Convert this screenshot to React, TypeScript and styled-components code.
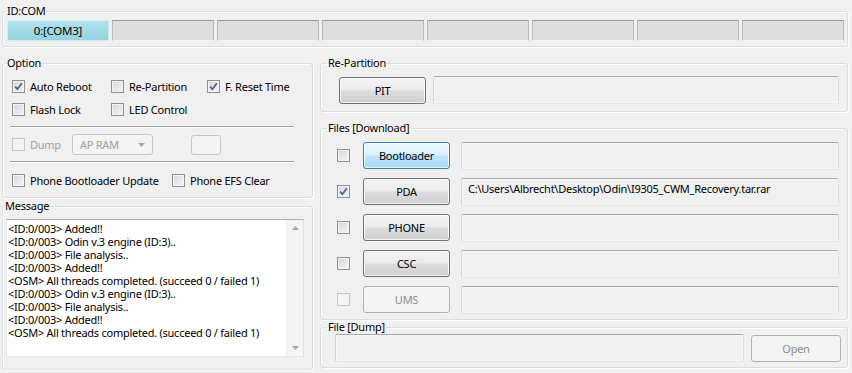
import React from 'react'
import styled, { createGlobalStyle, css } from 'styled-components'

const GlobalStyle = createGlobalStyle`
	html, body {
		margin: 0;
		padding: 0;
		background: #f0f0f0;
	}
	body {
		font-family: 'Noto Sans', 'Open Sans', sans-serif;
		font-size: 11px;
		letter-spacing: -0.25px;
		color: #000;
	}
`

const Window = styled.div`
	width: 852px;
	height: 373px;
	box-sizing: border-box;
	overflow: hidden;
	padding: 4px 4px 0 2px;
	background: #f0f0f0;
`

const Group = styled.fieldset<{ $mt?: number }>`
	margin: ${p => p.$mt ?? 0}px 0 0 0;
	padding: 0;
	min-width: 0;
	box-sizing: border-box;
	border: 1px solid #d5dfe5;
	border-radius: 3px;
	box-shadow: inset 1px 1px 0 #fff, 1px 1px 0 #fff;
`

const Legend = styled.legend<{ $x?: number }>`
	margin-left: ${p => p.$x ?? 3}px;
	padding: 0 1px;
	height: 14px;
	line-height: 14px;
	color: #000;
`

const Body = styled.div<{ $pad: string }>`
	padding: ${p => p.$pad};
`

const SlotRow = styled.div`
	display: grid;
	grid-template-columns: repeat(8, 102px);
	column-gap: 3px;
`

const Slot = styled.div<{ $active?: boolean }>`
	height: 21px;
	box-sizing: border-box;
	display: flex;
	align-items: center;
	justify-content: center;
	font-size: 11.5px;
	border: 1px solid;
	${p =>
		p.$active
			? css`
					background: linear-gradient(#b4e4ec, #9dd8e3 60%, #96d3df);
					border-color: #d6eff3 #c9eaf0 #c9eaf0 #d6eff3;
				`
			: css`
					background: #dedede;
					border-color: #9c9c9c #b9b9b9 #f4f4f4 #b9b9b9;
				`}
`

const Columns = styled.div`
	display: grid;
	grid-template-columns: 311px 528px;
	column-gap: 7px;
	margin-top: 9px;
`

const Column = styled.div`
	display: flex;
	flex-direction: column;
`

const OptionRow = styled.div<{ $cols: string; $mt?: number }>`
	display: grid;
	grid-template-columns: ${p => p.$cols};
	align-items: center;
	height: 20px;
	margin-top: ${p => p.$mt ?? 0}px;
`

const CheckLabel = styled.label<{ $disabled?: boolean }>`
	display: flex;
	align-items: center;
	gap: 5px;
	white-space: nowrap;
	color: ${p => (p.$disabled ? '#a0a0a0' : '#000')};
`

const Box = styled.span<{ $disabled?: boolean }>`
	width: 13px;
	height: 13px;
	box-sizing: border-box;
	flex: none;
	display: inline-flex;
	align-items: center;
	justify-content: center;
	border: 1px solid ${p => (p.$disabled ? '#c6c6c6' : '#8e8f8f')};
	background: ${p =>
		p.$disabled ? '#f4f4f4' : 'linear-gradient(135deg, #d6d6d6, #f6f6f6)'};
	box-shadow: inset 0 0 0 1px #f4f4f4;
`

const Separator = styled.div<{ $mt: number }>`
	margin: ${p => p.$mt}px 0 0 -2px;
	width: 284px;
	border-top: 1px solid #a0a0a0;
	border-bottom: 1px solid #fff;
`

const DumpRow = styled.div`
	display: flex;
	align-items: center;
	height: 21px;
	margin-top: 6px;
`

const Combo = styled.div`
	margin-left: 11px;
	width: 81px;
	height: 21px;
	box-sizing: border-box;
	border: 1px solid #c5c5c5;
	border-radius: 3px;
	background: #f4f4f4;
	color: #a0a0a0;
	display: flex;
	align-items: center;
	justify-content: space-between;
	padding: 0 7px 0 7px;
`

const SmallBox = styled.div`
	margin-left: 38px;
	width: 30px;
	height: 20px;
	box-sizing: border-box;
	border: 1px solid #c5c5c5;
	border-radius: 3px;
	background: #f4f4f4;
`

const Log = styled.div`
	width: 298px;
	height: 138px;
	box-sizing: border-box;
	border: 1px solid;
	border-color: #abadb3 #dbdfe6 #e3e9ef #e2e3ea;
	background: #fff;
	display: flex;
`

const LogText = styled.div`
	flex: 1;
	padding: 2px 0 0 1px;
	font-size: 11px;
	white-space: nowrap;
	overflow: hidden;
`

const LogLine = styled.div`
	height: 13px;
	line-height: 13px;
`

const ScrollBar = styled.div`
	width: 16px;
	background: #f4f4f4;
	border-left: 1px solid #f0f0f0;
	display: flex;
	flex-direction: column;
	justify-content: space-between;
	align-items: center;
	padding: 6px 0 6px;
`

const Button = styled.div<{ $variant?: 'hover' | 'disabled'; $w: number; $h?: number }>`
	width: ${p => p.$w}px;
	height: ${p => p.$h ?? 27}px;
	flex: none;
	box-sizing: border-box;
	border-radius: 3px;
	border: 1px solid #707070;
	display: flex;
	align-items: center;
	justify-content: center;
	font-size: 11px;
	color: #000;
	background: linear-gradient(#f2f2f2 0%, #ebebeb 49%, #dddddd 51%, #cfcfcf 100%);
	box-shadow: inset 0 0 0 1px rgba(255, 255, 255, 0.75);
	${p =>
		p.$variant === 'hover' &&
		css`
			border-color: #3c7fb1;
			background: linear-gradient(#eaf6fd 0%, #d9f0fc 49%, #bee6fd 51%, #a7d9f5 100%);
		`}
	${p =>
		p.$variant === 'disabled' &&
		css`
			border-color: #adb2b5;
			background: #f4f4f4;
			color: #8d8d8d;
			box-shadow: none;
		`}
`

const Field = styled.div<{ $h?: number }>`
	flex: 1;
	height: ${p => p.$h ?? 28}px;
	box-sizing: border-box;
	border: 1px solid;
	border-color: #a9a9a9 #dcdcdc #e6e6e6 #d4d4d4;
	border-radius: 2px;
	background: #f0f0f0;
	box-shadow: inset 0 0 0 1px #f7f7f7;
	padding: 2px 6px 0;
	font-size: 11px;
	white-space: nowrap;
	overflow: hidden;
`

const FileRow = styled.div<{ $h?: number; $gap?: number }>`
	display: flex;
	align-items: center;
	height: ${p => p.$h ?? 27}px;
	gap: ${p => p.$gap ?? 0}px;
`

const FileList = styled.div`
	display: flex;
	flex-direction: column;
	gap: 9px;
`

const FileButton = styled(Button)`
	margin: 0 11px 0 13px;
`

const Arrow = ({ up }: { up?: boolean }) => (
	<svg width='7' height='4' viewBox='0 0 7 4'>
		<path d={up ? 'M0 4 L3.5 0 L7 4 Z' : 'M0 0 L3.5 4 L7 0 Z'} fill='#a6a6a6' />
	</svg>
)

const Check = ({ checked, disabled }: { checked?: boolean; disabled?: boolean }) => (
	<Box $disabled={disabled}>
		{checked && (
			<svg width='9' height='9' viewBox='0 0 9 9'>
				<path
					d='M1.2 4.6 L3.4 7.2 L7.8 1.2'
					fill='none'
					stroke='#4a5f8c'
					strokeWidth='1.7'
				/>
			</svg>
		)}
	</Box>
)

const logLines = [
	'<ID:0/003> Added!!',
	'<ID:0/003> Odin v.3 engine (ID:3)..',
	'<ID:0/003> File analysis..',
	'<ID:0/003> Added!!',
	'<OSM> All threads completed. (succeed 0 / failed 1)',
	'<ID:0/003> Odin v.3 engine (ID:3)..',
	'<ID:0/003> File analysis..',
	'<ID:0/003> Added!!',
	'<OSM> All threads completed. (succeed 0 / failed 1)',
]

const files = [
	{ name: 'Bootloader', variant: 'hover' as const },
	{ name: 'PDA', checked: true, path: 'C:\\Users\\Albrecht\\Desktop\\Odin\\I9305_CWM_Recovery.tar.rar' },
	{ name: 'PHONE' },
	{ name: 'CSC' },
	{ name: 'UMS', variant: 'disabled' as const, disabled: true },
]

const App: React.FC = () => {
	return (
		<Window>
			<GlobalStyle />
			<Group>
				<Legend $x={3}>ID:COM</Legend>
				<Body $pad='2px 4px 5px 4px'>
					<SlotRow>
						<Slot $active>0:[COM3]</Slot>
						{Array.from({ length: 7 }).map((_, i) => (
							<Slot key={i} />
						))}
					</SlotRow>
				</Body>
			</Group>

			<Columns>
				<Column>
					<Group>
						<Legend $x={3}>Option</Legend>
						<Body $pad='6px 9px 7px 9px'>
							<OptionRow $cols='99px 96px auto'>
								<CheckLabel>
									<Check checked />
									Auto Reboot
								</CheckLabel>
								<CheckLabel>
									<Check />
									Re-Partition
								</CheckLabel>
								<CheckLabel>
									<Check checked />
									F. Reset Time
								</CheckLabel>
							</OptionRow>
							<OptionRow $cols='99px 96px auto' $mt={3}>
								<CheckLabel>
									<Check />
									Flash Lock
								</CheckLabel>
								<CheckLabel>
									<Check />
									LED Control
								</CheckLabel>
							</OptionRow>
							<Separator $mt={7} />
							<DumpRow>
								<CheckLabel $disabled>
									<Check disabled />
									Dump
								</CheckLabel>
								<Combo>
									AP RAM
									<Arrow />
								</Combo>
								<SmallBox />
							</DumpRow>
							<Separator $mt={6} />
							<OptionRow $cols='160px auto' $mt={7}>
								<CheckLabel>
									<Check />
									Phone Bootloader Update
								</CheckLabel>
								<CheckLabel>
									<Check />
									Phone EFS Clear
								</CheckLabel>
							</OptionRow>
						</Body>
					</Group>
					<Group $mt={1}>
						<Legend $x={1}>Message</Legend>
						<Body $pad='6px 8px 12px 3px'>
							<Log>
								<LogText>
									{logLines.map((l, i) => (
										<LogLine key={i}>{l}</LogLine>
									))}
								</LogText>
								<ScrollBar>
									<Arrow up />
									<Arrow />
								</ScrollBar>
							</Log>
						</Body>
					</Group>
				</Column>

				<Column>
					<Group>
						<Legend $x={6}>Re-Partition</Legend>
						<Body $pad='6px 8px 7px 18px'>
							<FileRow $h={28} $gap={7}>
								<Button $w={87}>PIT</Button>
								<Field />
							</FileRow>
						</Body>
					</Group>
					<Group $mt={9}>
						<Legend $x={6}>Files [Download]</Legend>
						<Body $pad='7px 8px 6px 16px'>
							<FileList>
								{files.map(f => (
									<FileRow key={f.name}>
										<Check checked={f.checked} disabled={f.disabled} />
										<FileButton $w={87} $variant={f.variant}>
											{f.name}
										</FileButton>
										<Field>{f.path}</Field>
									</FileRow>
								))}
							</FileList>
						</Body>
					</Group>
					<Group>
						<Legend $x={6}>File [Dump]</Legend>
						<Body $pad='0 6px 5px 14px'>
							<FileRow $h={28} $gap={7}>
								<Field />
								<Button $w={90} $variant='disabled'>
									Open
								</Button>
							</FileRow>
						</Body>
					</Group>
				</Column>
			</Columns>
		</Window>
	)
}

export default App
